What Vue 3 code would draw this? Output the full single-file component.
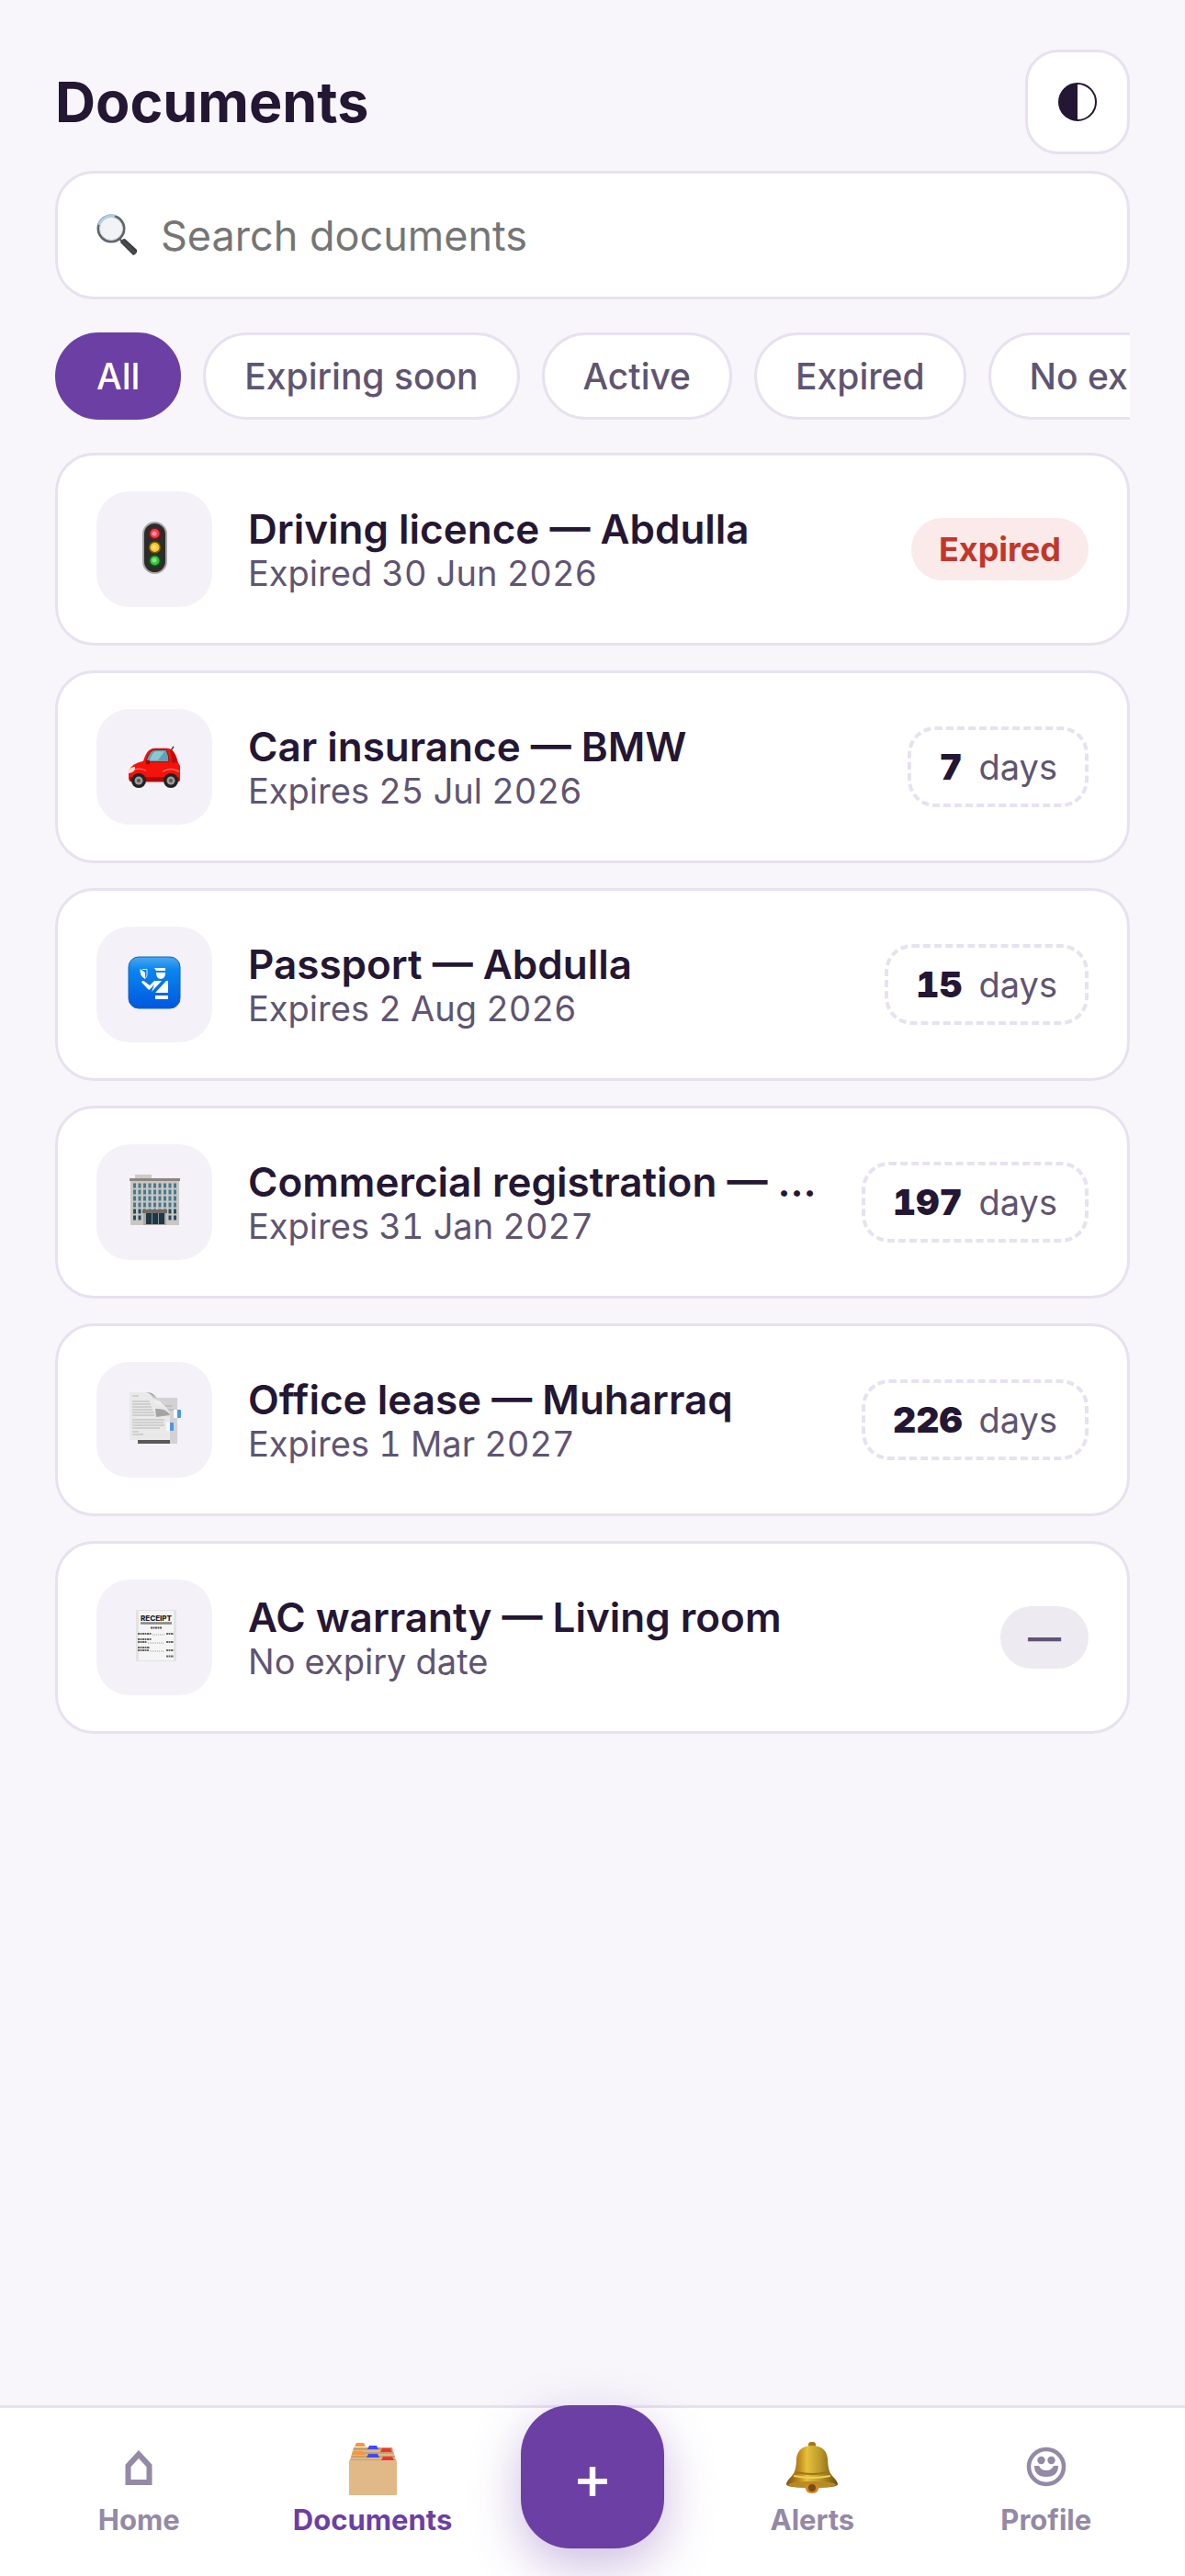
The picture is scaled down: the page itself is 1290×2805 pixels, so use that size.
<template>
  <div class="app">
    <main class="screen">
      <header class="topbar">
        <h1 class="title">Documents</h1>
        <button class="theme-btn" type="button" aria-label="Toggle theme" @click="isDark = !isDark">
          <svg class="theme-icon" viewBox="0 0 42 42">
            <circle cx="21" cy="21" r="20" fill="none" stroke="currentColor" stroke-width="2" />
            <path d="M21 1a20 20 0 0 0 0 40z" fill="currentColor" />
          </svg>
        </button>
      </header>

      <label class="search">
        <svg class="search-icon" viewBox="0 0 46 46">
          <defs>
            <linearGradient id="handle" x1="0" y1="1" x2="1" y2="0">
              <stop offset="0" stop-color="#000" />
              <stop offset="0.5" stop-color="#4a4e52" />
              <stop offset="1" stop-color="#000" />
            </linearGradient>
          </defs>
          <path d="M25 27l3 3" stroke="#555" stroke-width="2" />
          <path d="M26 31Q27 27 31 27L44 39Q45 43 40 45z" fill="url(#handle)" />
          <circle cx="16" cy="16" r="14" fill="#f2f3f4" stroke="#5d666d" stroke-width="3" />
          <path d="M3 12A14 14 0 0 1 20 2.500" fill="none" stroke="#a9cdea" stroke-width="3" />
          <circle cx="16" cy="16" r="12.500" fill="#f2f3f4" stroke="#c9ced2" stroke-width="1" />
        </svg>
        <input v-model="query" class="search-input" type="search" placeholder="Search documents" aria-label="Search documents" />
      </label>

      <div class="chips">
        <button
          v-for="f in filters"
          :key="f"
          type="button"
          class="chip"
          :class="{ active: f === current }"
          @click="current = f"
        >{{ f }}</button>
      </div>

      <ul class="list">
        <li v-for="doc in visibleDocs" :key="doc.name" class="card">
          <div class="tile">
            <svg v-if="doc.icon === 'light'" class="emoji" viewBox="0 0 58 58">
              <rect x="17" y="2" width="25" height="55" rx="12.500" fill="#2c2c2a" stroke="#a9a7a5" stroke-width="2" />
              <g stroke-width="1.500">
                <circle cx="29.500" cy="14" r="5.800" fill="#f53b4b" stroke="#7d1520" />
                <circle cx="29.500" cy="29" r="5.800" fill="#ffc61b" stroke="#7c5a08" />
                <circle cx="29.500" cy="43.500" r="5.800" fill="#32c53b" stroke="#12541a" />
              </g>
              <g fill="#fff" opacity="0.45">
                <circle cx="29" cy="14" r="2.500" />
                <circle cx="29" cy="29" r="2.500" />
                <circle cx="29" cy="43" r="2.500" />
              </g>
            </svg>
            <svg v-else-if="doc.icon === 'car'" class="emoji" viewBox="0 0 58 58">
              <g transform="translate(0 8) scale(1 0.88)">
                <path d="M47 6l3-5" stroke="#333" stroke-width="1.500" />
                <path d="M1 33Q2 25 11 21L17 19Q21 3 29 3H43Q51 3 55 21L57 25V42Q57 45 52 45H5Q1 44 1 40z" fill="#f5120b" />
                <path d="M20 19Q24 5 30 5H42Q45 12 45 20H20z" fill="#5da3b5" stroke="#7d1512" stroke-width="1" />
                <path d="M24 18Q27 7 31 7H40L33 18z" fill="#8fc6d2" />
                <path d="M48 5Q53 11 54 21H48Q48 12 46 5z" fill="#c00a08" />
                <path d="M4 31Q12 26 20 31M38 32Q47 26 56 32" fill="none" stroke="#ff6b5c" stroke-width="1.500" />
                <path d="M1 31Q3 26 8 26L8 29Q6 34 1 34z" fill="#ffdcd2" />
                <path d="M20 18h4v5h-4z" fill="#9c0907" />
                <path d="M2 39H56V44H2z" fill="#a90b09" />
              </g>
              <circle cx="12" cy="46" r="8" fill="#222" />
              <circle cx="47" cy="46" r="8" fill="#222" />
              <circle cx="12" cy="46" r="4.500" fill="#9b9b9b" />
              <circle cx="47" cy="46" r="4.500" fill="#9b9b9b" />
              <circle cx="12" cy="46" r="2" fill="#555" />
              <circle cx="47" cy="46" r="2" fill="#555" />
            </svg>
            <svg v-else-if="doc.icon === 'passport'" class="emoji" viewBox="0 0 58 58">
              <defs>
                <linearGradient id="blue" x1="0" y1="0" x2="0" y2="1">
                  <stop offset="0" stop-color="#4ba9ee" />
                  <stop offset="0.25" stop-color="#0a86ee" />
                  <stop offset="1" stop-color="#0057e0" />
                </linearGradient>
              </defs>
              <rect x="1" y="1" width="56" height="56" rx="11" fill="url(#blue)" stroke="#0b64bd" stroke-width="1" />
              <g fill="#fff">
                <path d="M29 13H41V16H31z" />
                <path d="M31 18H41Q41 25 36 25T31 18z" />
                <path d="M13.500 14L19 18V25Q13 22 13.500 14z" />
                <path d="M15 28.500Q16 26 18 27.500L24 32L29 27H37L26 39L29 31L24 36.500Q23 37 22 36z" />
                <path d="M44 27V40H30L42 27zM30 43H44V47H30z" />
              </g>
              <path d="M16 14.500h5v6q0 2-2 4" fill="none" stroke="#d7e8fb" stroke-width="1" />
            </svg>
            <svg v-else-if="doc.icon === 'office'" class="emoji" viewBox="0 0 58 58">
              <rect x="8" y="1" width="18" height="5" fill="#cfcac3" />
              <rect x="3" y="5" width="53" height="51" fill="#c9c7c3" />
              <rect x="2" y="5" width="55" height="3" fill="#8f8580" />
              <g>
                <template v-for="row in 6" :key="row">
                  <rect
                    v-for="col in 9"
                    :key="col"
                    :x="col * 5.5 + 0.5"
                    :y="row * 7 + 3.5"
                    width="3"
                    height="5"
                    :fill="row > 4 ? '#244d60' : '#477a91'"
                  />
                </template>
              </g>
              <rect x="17" y="42" width="25" height="14" fill="#aaa7a3" />
              <rect x="16" y="39" width="27" height="4" fill="#716b68" />
              <path d="M20 43h20v12H20z" fill="#1f3745" />
              <path d="M26.500 43v12M33.500 43v12" stroke="#8a9499" stroke-width="1" />
            </svg>
            <svg v-else-if="doc.icon === 'papers'" class="emoji" viewBox="0 0 58 58">
              <defs>
                <linearGradient id="curl" x1="0.600" y1="0" x2="0.300" y2="1">
                  <stop offset="0" stop-color="#6d6d6d" />
                  <stop offset="0.400" stop-color="#f0f0f0" />
                  <stop offset="0.700" stop-color="#e4e4e4" />
                  <stop offset="1" stop-color="#777" />
                </linearGradient>
              </defs>
              <path d="M11 7H54V57H11z" fill="#d2d2d2" />
              <path d="M11 53H46V57H11z" fill="#595959" />
              <path d="M41 16h7M42 20h8" stroke="#aaa" stroke-width="1" />
              <path d="M2 1H22Q29 2 29 17Q45 17 46 26V53H2z" fill="#e9e9e9" />
              <path d="M5 5h7M5 11h19M5 14h20M5 17h21M5 20h22M5 23h24M5 26h24M5 31h35M5 34h34M5 37h35M5 40h30M5 44h7M5 47h12" stroke="#b5b5b5" stroke-width="1" />
              <path d="M20 1Q29 2 29 18Q42 17 46 26Q46 20 40 16L29 4Q26 1 20 1z" fill="url(#curl)" />
              <path d="M30 19Q42 18 46 26L31 28z" fill="#a4a4a4" />
              <path d="M50 20h4v9h-4zM42 34h4v9h-4z" fill="#f8f8f8" />
              <path d="M54 20h3q1 0 1 1v7q0 1-1 1h-3zM46 34h4v9h-4z" fill="#4b98e8" />
            </svg>
            <svg v-else class="emoji" viewBox="0 0 58 58">
              <rect x="9" y="1" width="44" height="56" fill="#e3e3e3" />
              <rect x="12" y="2" width="38" height="54" fill="#f5f5f5" />
              <text x="31" y="12.500" class="receipt-head">RECEIPT</text>
              <path d="M14 15.500h34" stroke="#858585" stroke-width="2.500" />
              <path d="M25 20.500h12" stroke="#555" stroke-width="2" stroke-dasharray="2 0.500" />
              <path d="M11 27h15M11 33h15M11 36h10M11 42h13M11 45h12M42 27h8M42 36h8M42 45h8M42 51.500h8" stroke="#666" stroke-width="1.800" stroke-dasharray="2 0.500" />
              <path d="M27 28h13M22 37h18M24 46h16" stroke="#999" stroke-width="1" stroke-dasharray="1 1" />
            </svg>
          </div>

          <div class="info">
            <div class="name">{{ doc.name }}</div>
            <div class="sub">{{ doc.sub }}</div>
          </div>

          <span v-if="doc.days" class="days"><b>{{ doc.days }}</b><span>days</span></span>
          <span v-else-if="doc.expired" class="badge expired">Expired</span>
          <span v-else class="badge">—</span>
        </li>
      </ul>
    </main>

    <nav class="tabbar">
      <a href="#home" class="tab">
        <svg class="tab-icon" viewBox="0 0 58 58">
          <path d="M17.500 44V26L29 13.500 40.500 26V44z" fill="none" stroke="currentColor" stroke-width="6" />
        </svg>
        <span>Home</span>
      </a>
      <a href="#documents" class="tab active" aria-current="page">
        <svg class="tab-icon" viewBox="0 0 58 58">
          <path d="M8 6H50L54 20H4z" fill="#c99f6c" />
          <path d="M7 10H51M6 14H52M5 18H53" stroke="#e3c294" stroke-width="1.500" />
          <path d="M11 1h8l2 4H9zM8 10h10l3 4H6z" fill="#ff9433" />
          <path d="M25 4h8l2 4H23zM24 13h10l2 4H22z" fill="#3b4cf5" />
          <path d="M39 7h9l2 4H37zM40 16h10l2 4H38z" fill="#f43131" />
          <rect x="3" y="20" width="52" height="38" rx="1" fill="#e1b988" />
        </svg>
        <span>Documents</span>
      </a>
      <button class="fab" type="button" aria-label="Add document">+</button>
      <a href="#alerts" class="tab">
        <svg class="tab-icon" viewBox="0 0 58 58">
          <defs>
            <linearGradient id="brass" x1="0" y1="0" x2="1" y2="0">
              <stop offset="0" stop-color="#7d5210" />
              <stop offset="0.250" stop-color="#c08a1f" />
              <stop offset="0.400" stop-color="#e6c13a" />
              <stop offset="0.650" stop-color="#bd9a2b" />
              <stop offset="1" stop-color="#6f4d0e" />
            </linearGradient>
          </defs>
          <rect x="25" y="0" width="8" height="7" rx="3" fill="#a37818" />
          <path d="M29 4Q44 4 46 18Q46 32 51 37Q57 43 57 46Q57 50 29 50T1 46Q1 43 7 37Q12 32 12 18Q14 4 29 4z" fill="url(#brass)" />
          <path d="M12 33Q29 37 46 33" fill="none" stroke="#9b7420" stroke-width="2" />
          <path d="M9 37Q29 41 49 37" fill="none" stroke="#ecd255" stroke-width="2" />
          <ellipse cx="29" cy="46.500" rx="26" ry="3.500" fill="#b88b22" />
          <path d="M21 46h16q0 10-8 10t-8-10z" fill="#d0872a" />
          <circle cx="29" cy="50" r="4" fill="#7b4b15" />
        </svg>
        <span>Alerts</span>
      </a>
      <a href="#profile" class="tab">
        <svg class="tab-icon" viewBox="0 0 58 58">
          <circle cx="29" cy="27" r="19" fill="none" stroke="currentColor" stroke-width="4.500" />
          <circle cx="23.500" cy="20" r="4.200" fill="currentColor" />
          <circle cx="34.500" cy="20" r="4.200" fill="currentColor" />
          <path d="M16 26h5q2 5 8 5t8-5h5q0 12-13 12T16 26z" fill="currentColor" />
        </svg>
        <span>Profile</span>
      </a>
    </nav>
  </div>
</template>

<script setup>
import { ref, computed } from 'vue'

const isDark = ref(false)
const query = ref('')
const current = ref('All')

const filters = ['All', 'Expiring soon', 'Active', 'Expired', 'No expiry']

const docs = [
  { icon: 'light', name: 'Driving licence — Abdulla', sub: 'Expired 30 Jun 2026', expired: true },
  { icon: 'car', name: 'Car insurance — BMW', sub: 'Expires 25 Jul 2026', days: 7 },
  { icon: 'passport', name: 'Passport — Abdulla', sub: 'Expires 2 Aug 2026', days: 15 },
  { icon: 'office', name: 'Commercial registration — Workshop', sub: 'Expires 31 Jan 2027', days: 197 },
  { icon: 'papers', name: 'Office lease — Muharraq', sub: 'Expires 1 Mar 2027', days: 226 },
  { icon: 'receipt', name: 'AC warranty — Living room', sub: 'No expiry date' }
]

const matchesFilter = (doc) => {
  if (current.value === 'Expiring soon') return doc.days && doc.days <= 30
  if (current.value === 'Active') return !!doc.days
  if (current.value === 'Expired') return doc.expired
  if (current.value === 'No expiry') return !doc.days && !doc.expired
  return true
}

const visibleDocs = computed(() =>
  docs.filter((d) => matchesFilter(d) && d.name.toLowerCase().includes(query.value.toLowerCase()))
)
</script>

<style>
body {
  margin: 0;
  background: #f8f6fb;
}
</style>

<style scoped>
.app {
  min-height: 100vh;
  display: flex;
  flex-direction: column;
  background: #f8f6fb;
  color: #241733;
  font-family: Inter, "Liberation Sans", sans-serif;
  font-size: 44px;
}

button,
input {
  font-family: inherit;
}

.screen {
  flex: 1;
  padding: 54px 60px;
}

/* Header */
.topbar {
  display: flex;
  align-items: center;
  justify-content: space-between;
  margin-bottom: 18px;
}
.title {
  margin: 0;
  font-size: 61px;
  line-height: 72px;
  font-weight: 700;
}
.theme-btn {
  width: 114px;
  height: 114px;
  padding: 0;
  display: flex;
  align-items: center;
  justify-content: center;
  border: 3px solid #e7e1f0;
  border-radius: 36px;
  background: #fff;
  color: #241733;
}
.theme-icon {
  width: 42px;
  height: 42px;
}

/* Search */
.search {
  display: flex;
  align-items: center;
  gap: 24px;
  height: 140px;
  box-sizing: border-box;
  padding: 0 42px;
  margin-bottom: 36px;
  border: 3px solid #e7e1f0;
  border-radius: 42px;
  background: #fff;
}
.search-icon {
  width: 46px;
  height: 46px;
  flex: none;
}
.search-input {
  flex: 1;
  min-width: 0;
  padding: 0;
  border: 0;
  outline: 0;
  background: transparent;
  color: #241733;
  font-size: 45px;
}
.search-input::placeholder {
  color: #757575;
}

/* Filters */
.chips {
  display: flex;
  gap: 24px;
  margin-bottom: 36px;
  overflow-x: auto;
  scrollbar-width: none;
}
.chip {
  flex: none;
  height: 95px;
  padding: 0 42px;
  border: 3px solid #e7e1f0;
  border-radius: 48px;
  background: #fff;
  color: #5f5572;
  font-size: 39px;
  font-weight: 500;
}
.chip.active {
  background: #6c3fa5;
  border-color: #6c3fa5;
  color: #fff;
}

/* Document cards */
.list {
  margin: 0;
  padding: 0;
  list-style: none;
  display: flex;
  flex-direction: column;
  gap: 27px;
}
.card {
  display: flex;
  align-items: center;
  gap: 39px;
  padding: 39px 42px;
  border: 3px solid #e7e1f0;
  border-radius: 42px;
  background: #fff;
}
.tile {
  flex: none;
  width: 126px;
  height: 126px;
  box-sizing: border-box;
  padding-bottom: 4px;
  display: flex;
  align-items: center;
  justify-content: center;
  border-radius: 36px;
  background: #f4f1f9;
}
.emoji {
  width: 58px;
  height: 58px;
}
.receipt-head {
  font-size: 8px;
  font-weight: 800;
  text-anchor: middle;
  fill: #222;
}
.info {
  flex: 1;
  min-width: 0;
}
.name {
  font-size: 44px;
  line-height: 52px;
  font-weight: 600;
  white-space: nowrap;
  overflow: hidden;
  text-overflow: ellipsis;
}
.sub {
  font-size: 38px;
  line-height: 44px;
  color: #5f5572;
  font-variant-numeric: tabular-nums;
}
.badge {
  padding: 12px 30px;
  border-radius: 36px;
  background: #edeaf2;
  color: #5f5572;
  font-size: 36px;
  line-height: 44px;
  font-weight: 700;
}
.badge.expired {
  background: #faeaea;
  color: #c1372a;
}
.days {
  display: flex;
  align-items: baseline;
  gap: 18px;
  padding: 16px 30px;
  border: 4px dashed #e7e1f0;
  border-radius: 30px;
  color: #5f5572;
  font-size: 38px;
  line-height: 48px;
}
.days b {
  color: #241733;
  font-size: 39px;
  font-weight: 900;
  font-variant-numeric: tabular-nums;
}

/* Bottom navigation */
.tabbar {
  position: sticky;
  bottom: 0;
  display: flex;
  justify-content: space-around;
  align-items: flex-start;
  height: 186px;
  box-sizing: border-box;
  padding: 0 24px;
  border-top: 3px solid #e7e1f0;
  background: #fff;
}
.tab {
  width: 186px;
  padding-top: 37px;
  display: flex;
  flex-direction: column;
  align-items: center;
  gap: 6px;
  color: #9489a6;
  font-size: 31px;
  line-height: 42px;
  font-weight: 700;
  text-decoration: none;
}
.tab.active {
  color: #6c3fa5;
}
.tab-icon {
  width: 58px;
  height: 58px;
}
.fab {
  width: 156px;
  height: 156px;
  margin-top: -3px;
  padding: 0;
  border: 0;
  border-radius: 54px;
  background: #6c3fa5;
  color: #fff;
  font-size: 66px;
  font-weight: 500;
  box-shadow: 0 18px 54px rgba(108, 63, 165, 0.35);
}
</style>
